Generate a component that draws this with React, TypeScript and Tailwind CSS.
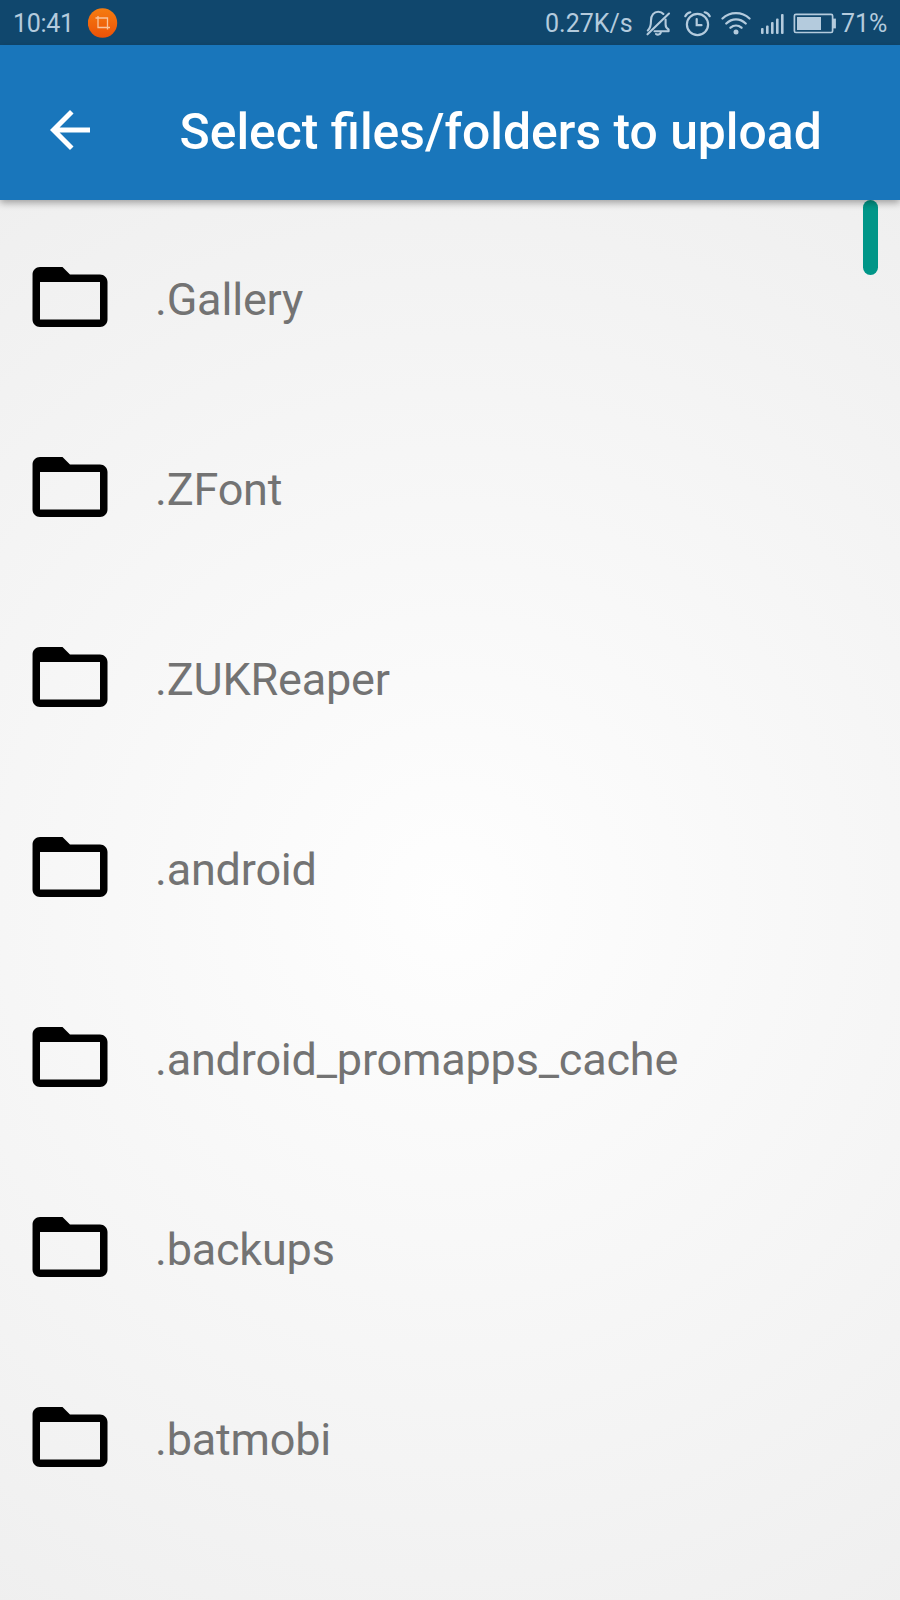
const folders = [
    '.Gallery',
    '.ZFont',
    '.ZUKReaper',
    '.android',
    '.android_promapps_cache',
    '.backups',
    '.batmobi',
];

function StatusBar() {
    return (
        <div className="flex h-[45px] items-center justify-between bg-[#10476d] pl-[13px] pr-[13px] text-[25px] leading-[45px] text-[#b4cbdd]">
            <div className="flex items-center">
                <span className="w-[75px] pt-px tracking-[-0.3px]">10:41</span>
                <svg className="h-[30px] w-[30px]" viewBox="0 0 30 30" fill="none">
                    <defs>
                        <linearGradient id="badge" x1="0" y1="0" x2="0" y2="1">
                            <stop offset="0" stopColor="#f57c10" />
                            <stop offset="1" stopColor="#ec5208" />
                        </linearGradient>
                    </defs>
                    <circle cx="14.5" cy="15" r="14.7" fill="url(#badge)" />
                    <path d="M7.5 10H19.5V21.5M10 8V19.5H22" stroke="#f9c49c" strokeWidth="1.3" />
                </svg>
            </div>

            <div className="flex items-center">
                <span className="w-[100px] pt-px whitespace-nowrap">0.27K/s</span>
                {/* Muted bell */}
                <svg className="h-[30px] w-[27px]" viewBox="0 0 27 30" fill="none" stroke="currentColor" strokeWidth="2.1" strokeLinecap="round" strokeLinejoin="round">
                    <path d="M2.8 22.5C5.6 20 6 17.5 6 12.5C6 7.2 9 3.8 13.2 3.8C15.4 3.8 17.2 4.6 18.4 6M20.6 11.5V16.5C20.6 19 21.7 20.5 23.6 21.5V23.2H9.5" />
                    <path d="M2.5 26.3L24 5.5M11 26C12.5 27.2 15 26.8 15.8 24.6" />
                </svg>
                <svg className="ml-[11px] h-[30px] w-[28px]" viewBox="0 0 28 30" fill="none" stroke="currentColor" strokeWidth="2.2" strokeLinecap="round">
                    <circle cx="14.5" cy="16.5" r="10.6" />
                    <path d="M13.7 11V17.2H18.5M2.3 8.2C3.3 6.2 5.1 4.8 7.3 4.3M26.7 8.2C25.7 6.2 23.9 4.8 21.7 4.3" />
                </svg>
                {/* Wifi */}
                <svg className="ml-[10px] h-[30px] w-[30px]" viewBox="0 0 30 30" fill="none" stroke="currentColor" strokeWidth="2.3" strokeLinecap="round">
                    <path d="M1.5 10.5C9 3.3 21 3.3 28.5 10.5M5.3 15.5C11 10 19 10 24.7 15.5M9.5 19.7C12.8 16.8 17.2 16.8 20.5 19.7" />
                    <circle cx="15" cy="24" r="2.5" fill="currentColor" stroke="none" />
                </svg>
                <svg className="ml-[10px] h-[30px] w-[23px]" viewBox="0 0 23 30" fill="currentColor">
                    <rect x="0" y="20" width="2.6" height="6" rx="1" />
                    <rect x="5" y="17.5" width="2.6" height="8.5" rx="1" />
                    <rect x="10" y="14" width="2.6" height="12" rx="1" />
                    <rect x="15" y="10.5" width="2.6" height="15.5" rx="1" />
                    <rect x="20" y="6" width="2.6" height="20" rx="1" />
                </svg>
                <svg className="ml-[9px] h-[30px] w-[43px]" viewBox="0 0 43 30" fill="none">
                    <rect x="1.4" y="6.3" width="38.2" height="18.2" rx="1.5" stroke="currentColor" strokeWidth="1.7" />
                    <rect x="4" y="9" width="24" height="13" fill="currentColor" />
                    <path d="M40.5 11.5H42V19.5H40.5Z" stroke="currentColor" strokeWidth="1.8" />
                </svg>
                <span className="ml-[5px] w-[46px] pt-px">71%</span>
            </div>
        </div>
    );
}

function FolderRow({ name }: { name: string }) {
    return (
        <li className="flex h-[190px] items-center pl-[25px] pt-1">
            <svg className="h-[90px] w-[90px] shrink-0" viewBox="0 0 24 24" fill="#000">
                <path d="M20 6h-8l-2-2H4c-1.1 0-1.99.9-1.99 2L2 18c0 1.1.9 2 2 2h16c1.1 0 2-.9 2-2V8c0-1.1-.9-2-2-2zm0 12H4V8h16v10z" />
            </svg>
            <span className="ml-10 pt-[5px] text-[45px] leading-[54px] tracking-[-0.2px] text-[#737373]">{name}</span>
        </li>
    );
}

export default function App() {
    return (
        <div className="flex h-[1600px] w-[900px] flex-col overflow-hidden font-['Roboto',sans-serif]">
            <StatusBar />

            <header className="relative z-10 flex h-[155px] items-center bg-[#1976bb] pl-10 pt-[15px] text-white shadow-[0_3px_7px_rgba(0,0,0,0.33)]">
                <svg className="h-[60px] w-[60px]" viewBox="0 0 24 24" fill="currentColor">
                    <path d="M20 11H7.83l5.59-5.59L12 4l-8 8 8 8 1.41-1.41L7.83 13H20v-2z" />
                </svg>
                <h1 className="ml-[79.5px] pt-1 text-[49.85px] font-medium leading-[60px] whitespace-nowrap">
                    Select files/folders to upload
                </h1>
            </header>

            <main className="relative flex-1 overflow-hidden bg-[radial-gradient(circle_900px_at_50%_50%,#fefefe,#eeeeee)]">
                <ul>
                    {folders.map((name) => (
                        <FolderRow key={name} name={name} />
                    ))}
                </ul>
                {/* Scroll thumb */}
                <div className="absolute right-[22.5px] top-0 h-[75px] w-[15px] rounded-full bg-[#009688]" />
            </main>
        </div>
    );
}
